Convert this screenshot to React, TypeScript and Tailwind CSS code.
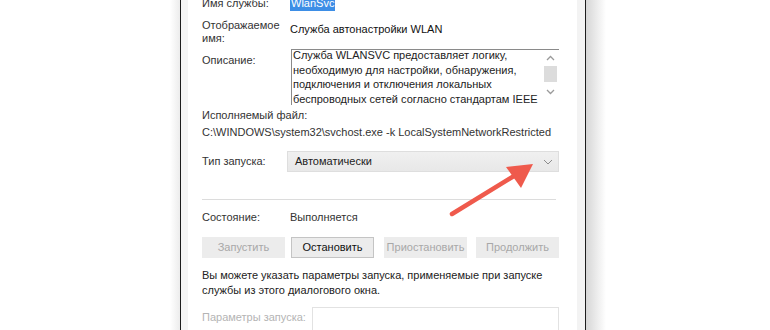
import React from 'react';

const disabledBtn =
  'flex h-[21px] w-[83px] shrink-0 items-center justify-center bg-[#ececec] text-[#a8a8a8]';

export default function App() {
  return (
    <div className="relative flex h-[330px] w-[770px] overflow-hidden bg-white font-['Liberation_Sans',Arial,sans-serif] text-[11px] text-[#333]">
      {/* left backdrop */}
      <div className="w-[170px] shrink-0" />
      <div className="w-[10px] shrink-0 bg-gradient-to-r from-white to-[#ececec]" />

      {/* dialog window */}
      <div className="flex w-[406px] shrink-0 border-x border-[#1c1c1c]">
        <div className="w-[7px] shrink-0 bg-[#f4f4f4]" />
        <div className="min-w-0 flex-1 pl-[14px] pr-[18px]">
          {/* service name */}
          <div className="-mt-[4px] flex leading-[15px]">
            <div className="w-[88px] shrink-0">Имя службы:</div>
            <span className="bg-[#3d8ee6] px-[1px] text-white">WlanSvc</span>
          </div>

          {/* display name */}
          <div className="mt-[8px] flex">
            <div className="w-[88px] shrink-0 leading-[13px]">
              Отображаемое
              <br />
              имя:
            </div>
            <div className="mt-[3px] leading-[15px] text-[#111]">Служба автонастройки WLAN</div>
          </div>

          {/* description */}
          <div className="mt-[4px] flex">
            <div className="mt-[4px] w-[89px] shrink-0 leading-[15px]">Описание:</div>
            <div className="flex h-[56px] min-w-0 flex-1 border-l border-t border-[#8a8a8a]">
              <div className="-mt-[2px] min-w-0 flex-1 whitespace-nowrap pl-[1px] leading-[14.7px] text-[#222]">
                Служба WLANSVC предоставляет логику,
                <br />
                необходимую для настройки, обнаружения,
                <br />
                подключения и отключения локальных
                <br />
                беспроводных сетей согласно стандартам IEEE
              </div>
              <div className="flex w-[17px] shrink-0 flex-col items-center pt-[5px]">
                <svg width="9" height="6" viewBox="0 0 9 6" className="text-[#9a9a9a]">
                  <path d="M1 5 L4.5 1.5 L8 5" fill="none" stroke="currentColor" strokeWidth="1.3" />
                </svg>
                <div className="mt-[5px] h-[16px] w-[13px] bg-[#dcdcdc]" />
                <svg width="9" height="6" viewBox="0 0 9 6" className="mt-[7px] text-[#9a9a9a]">
                  <path d="M1 1 L4.5 4.5 L8 1" fill="none" stroke="currentColor" strokeWidth="1.3" />
                </svg>
              </div>
            </div>
          </div>

          {/* executable */}
          <div className="mt-[3px] leading-[15px]">Исполняемый файл:</div>
          <div className="mt-[2px] whitespace-nowrap leading-[15px]">
            C:\WINDOWS\system32\svchost.exe -k LocalSystemNetworkRestricted
          </div>

          {/* startup type */}
          <div className="mt-[11px] flex items-center">
            <div className="w-[85px] shrink-0 leading-[15px]">Тип запуска:</div>
            <div className="flex h-[21px] min-w-0 flex-1 items-center justify-between border border-[#dedede] bg-gradient-to-b from-[#f0f0f0] to-[#e8e8e8] pl-[7px] pr-[5px] text-[#222]">
              <span>Автоматически</span>
              <svg width="10" height="6" viewBox="0 0 10 6" className="text-[#8c8c8c]">
                <path d="M1 1 L5 5 L9 1" fill="none" stroke="currentColor" strokeWidth="1" />
              </svg>
            </div>
          </div>

          <div className="mr-[3px] mt-[27px] h-px bg-[#dcdcdc]" />

          {/* state */}
          <div className="mt-[10px] flex leading-[15px]">
            <div className="w-[88px] shrink-0">Состояние:</div>
            <div>Выполняется</div>
          </div>

          {/* buttons */}
          <div className="mt-[12px] flex">
            <div className={disabledBtn}>Запустить</div>
            <div className="ml-[6px] flex h-[21px] w-[83px] shrink-0 items-center justify-center border border-[#c4c4c4] bg-[#ececec] text-[#111]">
              Остановить
            </div>
            <div className={`${disabledBtn} ml-[10px]`}>Приостановить</div>
            <div className={`${disabledBtn} ml-[9px]`}>Продолжить</div>
          </div>

          {/* hint */}
          <div className="mt-[10px] whitespace-nowrap leading-[14.5px] text-[#222]">
            Вы можете указать параметры запуска, применяемые при запуске
            <br />
            службы из этого диалогового окна.
          </div>

          {/* start params */}
          <div className="mt-[10px] flex items-start">
            <div className="mt-[3px] w-[110px] shrink-0 whitespace-nowrap leading-[15px] text-[#b4b4b4]">
              Параметры запуска:
            </div>
            <div className="h-[26px] min-w-0 flex-1 border border-[#e2e2e2]" />
          </div>
        </div>
        <div className="w-[8px] shrink-0 bg-[#f3f3f3]" />
      </div>

      {/* right backdrop shadow */}
      <div className="w-[20px] shrink-0 bg-gradient-to-r from-[#d6d6d6] to-white" />
      <div className="flex-1" />

      {/* red arrow annotation */}
      <svg className="pointer-events-none absolute left-0 top-0" width="770" height="330" viewBox="0 0 770 330">
        <line x1="452" y1="214" x2="514" y2="176" stroke="#ef5a4c" strokeWidth="4.5" strokeLinecap="round" />
        <polygon points="533,164 506,167 521,188" fill="#ef5a4c" />
      </svg>
    </div>
  );
}
